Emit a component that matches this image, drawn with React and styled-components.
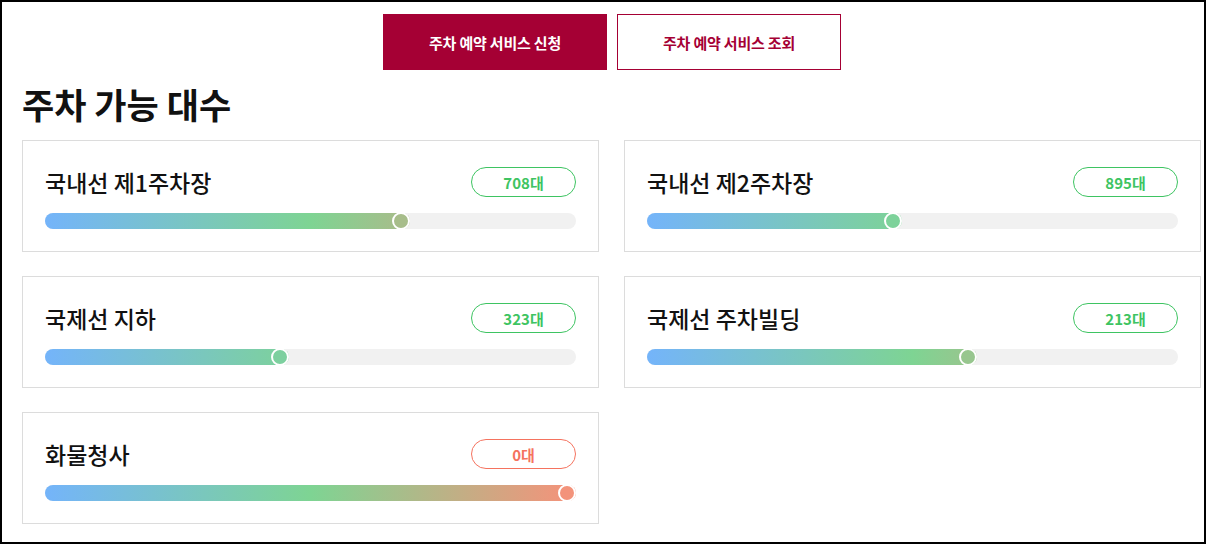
import React from 'react';
import styled, { createGlobalStyle } from 'styled-components';

const GlobalStyle = createGlobalStyle`
  html, body {
    margin: 0;
    padding: 0;
    background: #fff;
  }
  body {
    font-family: "Noto Sans CJK KR", "Noto Sans", sans-serif;
    color: #111;
  }
`;

const STOPS = [
  [0, [116, 180, 250]],
  [0.5, [126, 212, 147]],
  [1, [247, 145, 122]],
];

const colorAt = (t) => {
  for (let i = 1; i < STOPS.length; i++) {
    const [p0, c0] = STOPS[i - 1];
    const [p1, c1] = STOPS[i];
    if (t <= p1) {
      const k = (t - p0) / (p1 - p0);
      const c = c0.map((v, j) => Math.round(v + (c1[j] - v) * k));
      return `rgb(${c.join(',')})`;
    }
  }
  return `rgb(${STOPS[STOPS.length - 1][1].join(',')})`;
};

const Page = styled.div`
  box-sizing: border-box;
  width: 100%;
  height: 544px;
  border: 2px solid #000;
  padding: 12px 0 0 20px;
`;

const Tabs = styled.div`
  display: flex;
  justify-content: center;
  gap: 10px;
  margin-left: -2px;
`;

const Tab = styled.button`
  box-sizing: border-box;
  width: 224px;
  height: 56px;
  border: 1px solid #a50034;
  background: ${(p) => (p.$active ? '#a50034' : '#fff')};
  color: ${(p) => (p.$active ? '#fff' : '#a50034')};
  font-family: inherit;
  font-size: 15px;
  font-weight: 700;
  letter-spacing: -0.2px;
  cursor: pointer;
`;

const Title = styled.h2`
  margin: 12px 0 14px;
  font-size: 35px;
  font-weight: 700;
  line-height: 44px;
  color: #111;
`;

const Grid = styled.div`
  display: grid;
  grid-template-columns: 577px 577px;
  column-gap: 25px;
  row-gap: 24px;
`;

const Card = styled.div`
  box-sizing: border-box;
  border: 1px solid #dcdcdc;
  padding: 26px 22px 22px;
  display: flex;
  flex-direction: column;
  gap: 16px;
`;

const Head = styled.div`
  display: flex;
  align-items: center;
  justify-content: space-between;
  height: 30px;
`;

const Name = styled.span`
  font-size: 23px;
  font-weight: 500;
  color: #111;
`;

const Badge = styled.span`
  box-sizing: border-box;
  width: 105px;
  height: 30px;
  border-radius: 15px;
  border: 1px solid ${(p) => (p.$empty ? '#f5735f' : '#3ec462')};
  color: ${(p) => (p.$empty ? '#f5735f' : '#3ec462')};
  font-size: 15px;
  font-weight: 700;
  display: flex;
  align-items: center;
  justify-content: center;
`;

const Track = styled.div`
  position: relative;
  height: 16px;
  border-radius: 8px;
  background: #f1f1f1;
`;

const Fill = styled.div`
  position: relative;
  height: 100%;
  border-radius: 8px;
  background-image: linear-gradient(90deg, #74b4fa 0%, #7ed493 50%, #f7917a 100%);
  background-repeat: no-repeat;
`;

const Knob = styled.span`
  position: absolute;
  right: 0;
  top: 50%;
  transform: translateY(-50%);
  box-sizing: border-box;
  width: 18px;
  height: 18px;
  border-radius: 50%;
  border: 2px solid #fff;
`;

const lots = [
  { name: '국내선 제1주차장', count: 708, pct: 68.8 },
  { name: '국내선 제2주차장', count: 895, pct: 48.1 },
  { name: '국제선 지하', count: 323, pct: 45.9 },
  { name: '국제선 주차빌딩', count: 213, pct: 62.2 },
  { name: '화물청사', count: 0, pct: 100 },
];

const BAR_W = 531;

const Lot = ({ name, count, pct }) => {
  const knobCenter = (pct / 100) * BAR_W - 9;
  const knobColor = colorAt(Math.max(0, knobCenter / BAR_W));
  return (
    <Card>
      <Head>
        <Name>{name}</Name>
        <Badge $empty={count === 0}>{count}대</Badge>
      </Head>
      <Track>
        <Fill style={{ width: `${pct}%`, backgroundSize: `${(100 / pct) * 100}% 100%` }}>
          <Knob style={{ background: knobColor }} />
        </Fill>
      </Track>
    </Card>
  );
};

export default function App() {
  return (
    <>
      <GlobalStyle />
      <Page>
        <Tabs>
          <Tab $active>주차 예약 서비스 신청</Tab>
          <Tab>주차 예약 서비스 조회</Tab>
        </Tabs>
        <Title>주차 가능 대수</Title>
        <Grid>
          {lots.map((l) => (
            <Lot key={l.name} {...l} />
          ))}
        </Grid>
      </Page>
    </>
  );
}
